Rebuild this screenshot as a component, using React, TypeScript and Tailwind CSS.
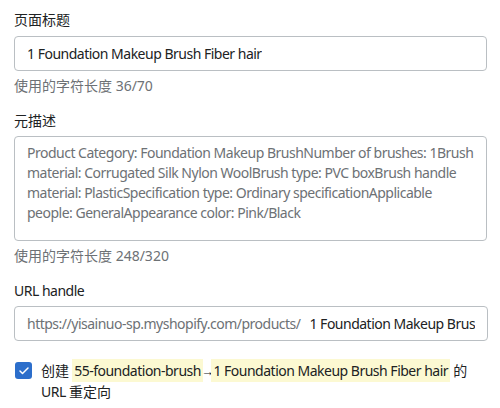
import { Check } from "lucide-react";

const font = "font-['Noto_Sans','Noto_Sans_CJK_SC',sans-serif]";

const metaLines = [
  "Product Category: Foundation Makeup BrushNumber of brushes: 1Brush",
  "material: Corrugated Silk Nylon WoolBrush type: PVC boxBrush handle",
  "material: PlasticSpecification type: Ordinary specificationApplicable",
  "people: GeneralAppearance color: Pink/Black",
];

export default function App() {
  return (
    <div className={`w-[500px] h-[408px] bg-white px-[14px] pt-[10px] text-[14px] leading-[20px] tracking-[-0.5px] text-[#202223] ${font}`}>
      {/* 页面标题 */}
      <div className="flex flex-col">
        <label className="mb-[6px] tracking-normal">页面标题</label>
        <div className="h-[35px] w-[473px] flex items-center rounded-[4px] border border-[#babfc3] px-[12px]">
          <span className="whitespace-nowrap overflow-hidden">1 Foundation Makeup Brush Fiber hair</span>
        </div>
        <p className="mt-[5px] text-[#6d7175] tracking-normal">使用的字符长度 36/70</p>
      </div>

      {/* 元描述 */}
      <div className="flex flex-col mt-[15px]">
        <label className="mb-[5px] tracking-normal">元描述</label>
        <div className="h-[105px] w-[473px] rounded-[4px] border border-[#babfc3] px-[12px] pt-[6px] text-[#6d7175]">
          {metaLines.map((l) => (
            <div key={l} className="whitespace-nowrap">{l}</div>
          ))}
        </div>
        <p className="mt-[5px] text-[#6d7175] tracking-normal">使用的字符长度 248/320</p>
      </div>

      {/* URL handle */}
      <div className="flex flex-col mt-[15px]">
        <label className="mb-[5px]">URL handle</label>
        <div className="h-[35px] w-[474px] flex items-center rounded-[4px] border border-[#babfc3] pl-[12px] pr-[12px]">
          <div className="flex min-w-0 overflow-hidden whitespace-nowrap">
            <span className="text-[#6d7175]">https://yisainuo-sp.myshopify.com/products/</span>
            <span className="ml-[9px]">1 Foundation Makeup Brush Fiber hair</span>
          </div>
        </div>
      </div>

      {/* redirect */}
      <div className="flex items-start gap-[9px] mt-[20px] pl-[1px]">
        <span className="mt-[1px] flex h-[17px] w-[17px] shrink-0 items-center justify-center rounded-[3px] bg-[#2c6ecb]">
          <Check size={12} strokeWidth={3} color="white" />
        </span>
        <p className="leading-[20px]">
          <span className="tracking-normal">创建</span>{" "}
          <span className="bg-[#fcf9d2] py-[2px] px-[2px]">55-foundation-brush</span><span className="font-['Liberation_Sans',sans-serif] text-[13px] mx-[-2px]">→</span><span className="bg-[#fcf9d2] py-[2px] px-[2px]">1 Foundation Makeup Brush Fiber hair</span>{" "}
          <span className="tracking-normal">的</span>
          <br />
          URL <span className="tracking-normal">重定向</span>
        </p>
      </div>
    </div>
  );
}
